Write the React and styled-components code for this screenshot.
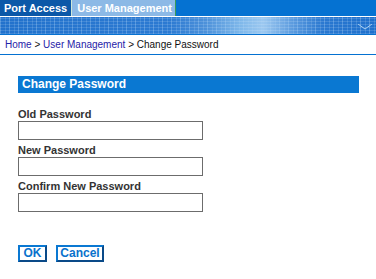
import React from "react";
import styled, { createGlobalStyle } from "styled-components";

const Global = createGlobalStyle`
  html, body { margin: 0; padding: 0; background: #fff; }
  body { font-family: "Liberation Sans", Arial, sans-serif; }
`;

const Page = styled.div`
  width: 376px;
  height: 279px;
  overflow: hidden;
  background: #fff;
`;

const TabBar = styled.div`
  display: flex;
  height: 16px;
  background: #0572d2;
`;

const Tab = styled.div`
  height: 16px;
  padding: ${p => (p.$active ? "0 3px 0 5px" : "0 4px")};
  background: ${p => (p.$active ? "#8cb9e6" : "#0b58a8")};
  border-right: 1px solid ${p => (p.$active ? "#3a9a5a" : "#cfe8d8")};
  color: #fff;
  font-weight: bold;
  font-size: 11px;
  line-height: 16px;
  white-space: nowrap;
`;

const Band = styled.div`
  position: relative;
  height: 17px;
  border-top: 1px solid #fff;
  border-bottom: 1px solid #0572d2;
  background:
    repeating-linear-gradient(0deg, rgba(255,255,255,0.13) 0 1px, transparent 1px 3px),
    repeating-linear-gradient(90deg, rgba(160,205,245,0.35) 0 1px, transparent 1px 5px, rgba(160,205,245,0.2) 5px 6px, transparent 6px 9px),
    linear-gradient(90deg, #2272cc 0%, #2c7ad2 45%, #4e92da 55%, #7fb8ea 64%, #9cc8f0 70%, #5a9ade 78%, #2a78d0 86%, #1f70cc 100%);
`;

const Chevron = styled.svg`
  position: absolute;
  right: 4px;
  top: 7px;
`;

const Breadcrumb = styled.div`
  height: 19px;
  padding-left: 5px;
  font-size: 10px;
  line-height: 19px;
  color: #111;
  border-bottom: 1px solid #0572d2;
`;

const Crumb = styled.span`
  color: #1f22a8;
`;

const Content = styled.div`
  padding: 21px 17px 0 18px;
`;

const SectionTitle = styled.div`
  height: 17px;
  background: #0a78d2;
  color: #fff;
  font-weight: bold;
  font-size: 12px;
  line-height: 17px;
  padding-left: 4px;
`;

const Form = styled.div`
  display: flex;
  flex-direction: column;
  gap: 4px;
  margin-top: 15px;
`;

const Field = styled.div`
  display: flex;
  flex-direction: column;
`;

const Label = styled.label`
  font-size: 11px;
  font-weight: bold;
  line-height: 13px;
  color: #333;
`;

const Input = styled.input`
  box-sizing: border-box;
  width: 185px;
  height: 19px;
  margin: 0;
  padding: 0 2px;
  border: 1px solid #6c6c6c;
  background: #fff;
  outline: none;
`;

const Actions = styled.div`
  display: flex;
  gap: 9px;
  margin-top: 33px;
`;

const Button = styled.button`
  box-sizing: border-box;
  height: 17px;
  width: ${p => p.$w}px;
  padding: 0;
  margin: 0;
  background: #fff;
  border: 2px solid;
  border-color: #0a78d2 #0a4a88 #0a4a88 #0a78d2;
  color: #0a72cc;
  font-family: "Liberation Sans", Arial, sans-serif;
  font-weight: bold;
  font-size: 12px;
  line-height: 13px;
`;

export default function App() {
  return (
    <Page>
      <Global />
      <TabBar>
        <Tab>Port Access</Tab>
        <Tab $active>User Management</Tab>
      </TabBar>
      <Band>
        <Chevron width="14" height="6" viewBox="0 0 14 6">
          <polyline points="0,0 7,5 14,0" fill="none" stroke="#a9d0f2" strokeWidth="1" />
        </Chevron>
      </Band>
      <Breadcrumb>
        <Crumb>Home</Crumb> &gt; <Crumb>User Management</Crumb> &gt; Change Password
      </Breadcrumb>
      <Content>
        <SectionTitle>Change Password</SectionTitle>
        <Form>
          <Field>
            <Label>Old Password</Label>
            <Input type="password" />
          </Field>
          <Field>
            <Label>New Password</Label>
            <Input type="password" />
          </Field>
          <Field>
            <Label>Confirm New Password</Label>
            <Input type="password" />
          </Field>
        </Form>
        <Actions>
          <Button $w={29}>OK</Button>
          <Button $w={48}>Cancel</Button>
        </Actions>
      </Content>
    </Page>
  );
}
